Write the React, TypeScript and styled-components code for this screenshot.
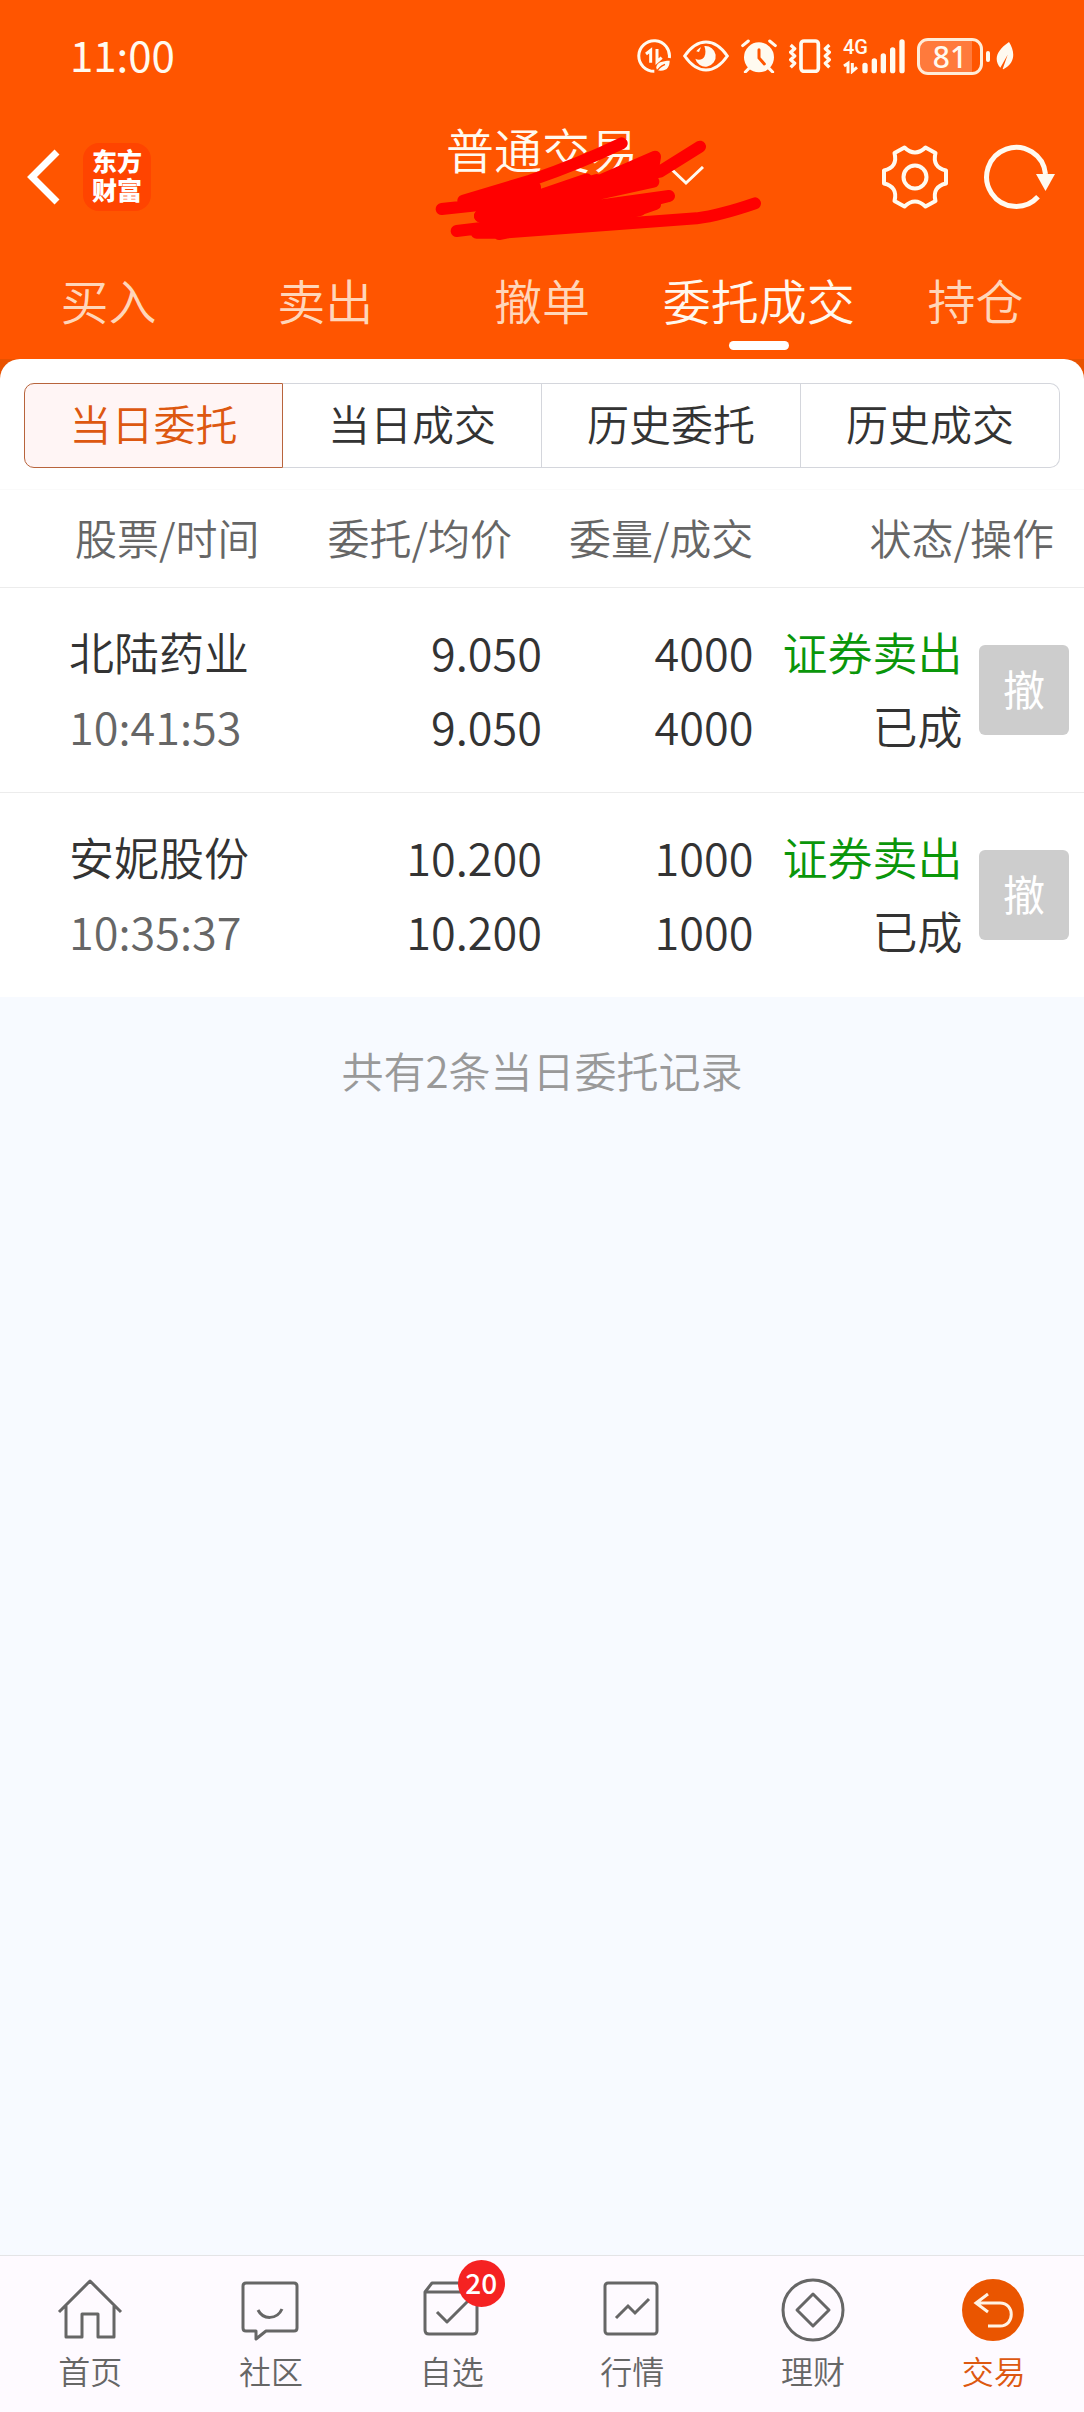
import React from "react";
import styled, { createGlobalStyle } from "styled-components";

const GlobalStyle = createGlobalStyle`
  *, *::before, *::after { box-sizing: border-box; }
  body {
    margin: 0;
    background: #f7faff;
    color: #333;
    font-family: "Noto Sans CJK SC", "Noto Sans", sans-serif;
    font-weight: 350;
  }
  button {
    margin: 0;
    padding: 0;
    border: 0;
    background: none;
    font: inherit;
    color: inherit;
    cursor: pointer;
  }
  a { color: inherit; text-decoration: none; }
  svg { display: block; flex: none; }
`;

const Screen = styled.div`
  min-height: 100vh;
  display: flex;
  flex-direction: column;
`;

const Header = styled.header`
  background: #ff5500;
  color: #fffaf0;
`;

const StatusBar = styled.div`
  display: flex;
  align-items: center;
  justify-content: space-between;
  height: 112px;
  padding: 0 70px;
`;

const Clock = styled.time`
  padding-bottom: 4px;
  font-size: 42px;
  font-weight: 400;
  line-height: 48px;
`;

const StatusIcons = styled.div`
  display: flex;
  align-items: center;
  gap: 12px;
`;

const Signal = styled.div`
  position: relative;
  width: 62px;
  height: 36px;
`;

const SignalLabel = styled.span`
  position: absolute;
  left: 0;
  top: 0;
  font: 500 20px/18px Roboto, sans-serif;
`;

const Battery = styled.div`
  display: flex;
  align-items: center;
  gap: 3px;
`;

const BatteryBody = styled.span`
  width: 66px;
  height: 37px;
  border: 3px solid #ffecd8;
  border-radius: 11px;
  background: linear-gradient(90deg, #ff7a3c 86%, #ff5500 86%);
  font: 500 30px/31px "Noto Sans", sans-serif;
  text-align: center;
`;

const BatteryTip = styled.span`
  width: 4px;
  height: 11px;
  margin-right: 3px;
  border-radius: 2px;
  background: #fffaf0;
`;

const NavBar = styled.div`
  position: relative;
  display: grid;
  grid-template-columns: 1fr auto 1fr;
  align-items: center;
  height: 130px;
  padding: 0 27px 0 27px;
`;

const NavSide = styled.div<{ $end?: boolean }>`
  display: flex;
  align-items: center;
  justify-content: ${(p) => (p.$end ? "flex-end" : "flex-start")};
  gap: ${(p) => (p.$end ? 34 : 22)}px;
`;

const Logo = styled.span`
  display: grid;
  place-content: center;
  width: 68px;
  height: 68px;
  border-radius: 16px;
  background: #ff4400;
  color: #fff;
  font-family: "Liberation Sans", "Noto Sans CJK SC", sans-serif;
  font-size: 25px;
  font-weight: 900;
  line-height: 29px;
`;

const AccountButton = styled.button`
  align-self: start;
  font-size: 48px;
  line-height: 72px;
`;

const Chevron = styled.svg`
  position: absolute;
  left: calc(50% + 126px);
  top: 54px;
`;

const Scribble = styled.svg`
  position: absolute;
  left: calc(50% - 122px);
  top: -12px;
  pointer-events: none;
`;

const MainTabs = styled.nav`
  display: grid;
  grid-template-columns: repeat(5, 1fr);
  height: 117px;
`;

const MainTab = styled.button<{ $active?: boolean }>`
  display: flex;
  flex-direction: column;
  align-items: center;
  padding-top: 24px;
  color: ${(p) => (p.$active ? "#fff8ee" : "#ffd6ba")};
  font-size: 48px;
  line-height: 66px;
  white-space: nowrap;

  &::after {
    content: "";
    width: 60px;
    height: 9px;
    margin-top: 9px;
    border-radius: 5px;
    background: ${(p) => (p.$active ? "#fff" : "transparent")};
  }
`;

const CardBackdrop = styled.div`
  background: linear-gradient(#e95200 24px, #fff 24px);
`;

const Card = styled.main`
  border-radius: 20px 20px 0 0;
  background: #fff;
`;

const Segments = styled.div`
  display: grid;
  grid-template-columns: repeat(4, 1fr);
  padding: 24px 24px 21px;
`;

const Segment = styled.button<{ $active?: boolean }>`
  height: 85px;
  padding-bottom: 5px;
  border: 1px solid ${(p) => (p.$active ? "#b8643c" : "#d4d6dc")};
  border-left-width: ${(p) => (p.$active ? 1 : 0)}px;
  background: ${(p) => (p.$active ? "#fff5f5" : "#fff")};
  color: ${(p) => (p.$active ? "#dd5810" : "#333")};
  font-size: 42px;
  line-height: 60px;

  &:first-child { border-radius: 10px 0 0 10px; }
  &:last-child { border-radius: 0 10px 10px 0; }
`;

const OrderTable = styled.table`
  width: 100%;
  border-collapse: collapse;
  table-layout: fixed;
`;

const Col = styled.col<{ $share: string }>`
  width: ${(p) => p.$share};
`;

const HeadCell = styled.th<{ $pad: string; $left?: boolean }>`
  height: 98px;
  padding: ${(p) => p.$pad};
  border-top: 1px solid #fafafa;
  border-bottom: 1px solid #ececec;
  color: #666;
  font-size: 42px;
  font-weight: 350;
  line-height: 60px;
  text-align: ${(p) => (p.$left ? "left" : "right")};
  white-space: nowrap;
`;

const Row = styled.tr`
  & + & { border-top: 1px solid #ececec; }
`;

const Cell = styled.td<{ $left?: boolean }>`
  padding: 27px 0 29px ${(p) => (p.$left ? 69 : 0)}px;
  font-size: 45px;
  line-height: 74px;
  text-align: ${(p) => (p.$left ? "left" : "right")};
  white-space: nowrap;
`;

const Line = styled.div<{ $tone?: "muted" | "sell" }>`
  color: ${(p) => (p.$tone === "muted" ? "#666" : p.$tone === "sell" ? "#0a960a" : "#333")};
`;

const ActionCell = styled.td`
  padding: 0 15px 0 0;
  vertical-align: middle;
`;

const CancelButton = styled.button`
  display: block;
  width: 90px;
  height: 90px;
  margin-left: auto;
  padding-bottom: 6px;
  border-radius: 6px;
  background: #cdcdcd;
  color: #fff;
  font-size: 42px;
  font-weight: 400;
`;

const Summary = styled.p`
  flex: 1;
  margin: 0;
  padding-top: 43px;
  color: #999;
  font-size: 42px;
  line-height: 60px;
  text-align: center;
`;

const BottomBar = styled.nav`
  display: grid;
  grid-template-columns: repeat(6, 1fr);
  height: 157px;
  border-top: 1px solid #e4e4e6;
  background: #fefaff;
`;

const BottomLink = styled.a<{ $active?: boolean }>`
  display: flex;
  flex-direction: column;
  align-items: center;
  padding-top: 20px;
  color: ${(p) => (p.$active ? "#dd5810" : "#666")};
  font-size: 32px;
  line-height: 46px;
`;

const IconBox = styled.span`
  position: relative;
  width: 66px;
  height: 70px;
  margin-bottom: 1px;
`;

const Badge = styled.span`
  position: absolute;
  left: 39px;
  top: -16px;
  width: 47px;
  height: 47px;
  border-radius: 50%;
  background: #f52222;
  color: #fff;
  font-size: 28px;
  font-weight: 500;
  line-height: 44px;
  text-align: center;
`;

const statusInk = "#fffaf0";

const DataIcon = () => (
  <svg width="34" height="34" viewBox="0 0 102 102" fill="none" stroke={statusInk} strokeWidth="9">
    <path d="M97 57A46 46 0 1 0 52 97" />
    <path d="M27 45l14-11v37M60 30v38l14-12" strokeWidth="9" />
    <path d="M98 65c-22 0-40 6-40 20 0 6 3 9 3 9 30 5 37-12 37-29z" fill={statusInk} stroke="none" />
    <path d="M56 102c6-12 14-20 28-26" stroke="#ff5500" strokeWidth="4" />
  </svg>
);

const EyeIcon = () => (
  <svg width="46" height="34" viewBox="0 0 138 102">
    <path d="M5 51C25 22 48 9 69 9s44 13 64 42C113 80 90 93 69 93S25 80 5 51z" fill="none" stroke={statusInk} strokeWidth="9" />
    <path d="M64 21a31 31 0 1 1-27 38c10 6 22 3 27-6 5-8 4-22 0-32z" fill={statusInk} />
    <path d="M40 37c4-6 8-9 14-12l-6 14z" fill={statusInk} />
  </svg>
);

const AlarmIcon = () => (
  <svg width="36" height="34" viewBox="0 0 108 102">
    <circle cx="54" cy="55" r="45" fill={statusInk} />
    <path d="M5 20L22 6M86 6l17 14M26 86l-13 13M82 86l13 13" stroke={statusInk} strokeWidth="9" strokeLinecap="round" />
    <path d="M54 32v25l16 18" fill="none" stroke="#ff5500" strokeWidth="9" strokeLinecap="round" />
  </svg>
);

const VibrateIcon = () => (
  <svg width="42" height="34" viewBox="0 0 126 102" fill="none" stroke={statusInk} strokeWidth="10" strokeLinejoin="round">
    <rect x="36" y="6" width="52" height="91" rx="9" strokeWidth="11" />
    <path d="M5 18l12 11-12 11 12 11-12 11 12 11-12 12M121 18l-12 11 12 11-12 11 12 11-12 11 12 12" />
  </svg>
);

const SignalBars = () => (
  <svg width="62" height="36" viewBox="0 0 186 108" stroke={statusInk} strokeLinecap="round">
    <path d="M66 82v16M94 69v29M121 54v44M149 36v62M177 12v86" strokeWidth="16" />
    <path d="M3 84l12-8v30M28 75v25l14-12" fill="none" strokeWidth="9" strokeLinecap="butt" />
  </svg>
);

const LeafIcon = () => (
  <svg width="18" height="28" viewBox="0 0 54 84">
    <path d="M39 0c17 26 22 62-17 82l-2-1 15-43-22 39C-6 55-2 28 39 0z" fill={statusInk} />
  </svg>
);

const BackIcon = () => (
  <svg width="34" height="58" viewBox="3 0 34 58" fill="none" stroke="#fff" strokeWidth="7">
    <path d="M33 4L8 29l25 25" />
  </svg>
);

const GearIcon = () => (
  <svg width="68" height="68" viewBox="-34 -34 68 68" fill="none" stroke={statusInk} strokeWidth="4" strokeLinejoin="round">
    <circle r="11.5" />
    <path d="M-10.5-29.5Q0-19.5 10.5-29.5L20.5-24Q16.9-9.75 31-6.5V6.5Q16.9 9.75 20.5 24L10.5 29.5Q0 19.5-10.5 29.5L-20.5 24Q-16.9 9.75-31 6.5V-6.5Q-16.9-9.75-20.5-24Z" />
  </svg>
);

const RefreshIcon = () => (
  <svg width="74" height="68" viewBox="-33 -34 74 68">
    <path d="M22 19.7A29.5 29.5 0 1 1 29.5-3" fill="none" stroke={statusInk} strokeWidth="5" />
    <path d="M20-3h19L29.5 14z" fill={statusInk} />
  </svg>
);

const HomeIcon = () => (
  <svg width="66" height="70" viewBox="0 0 66 70" fill="none" stroke="#666" strokeWidth="3" strokeLinejoin="round">
    <path d="M2 36L33 5l31 31M9 30v31h16V38h16v23h16V30" />
  </svg>
);

const ChatIcon = () => (
  <svg width="66" height="70" viewBox="0 0 66 70" fill="none" stroke="#666" strokeWidth="3" strokeLinejoin="round">
    <path d="M8 7h48q3 0 3 3v42q0 3-3 3H28l-10 8v-8H8q-3 0-3-3V10q0-3 3-3z" />
    <path d="M20 34c5 10 19 10 24-1" />
  </svg>
);

const BoxIcon = () => (
  <svg width="66" height="70" viewBox="0 0 66 70" fill="none" stroke="#666" strokeWidth="3" strokeLinejoin="round">
    <path d="M6 16l7-9h38l7 9v38q0 4-4 4H10q-4 0-4-4zM6 16h52M18 36l10 10 21-21" />
  </svg>
);

const ChartIcon = () => (
  <svg width="66" height="70" viewBox="0 0 66 70" fill="none" stroke="#666" strokeWidth="3">
    <rect x="6" y="7" width="52" height="51" rx="3" />
    <path d="M17 42l12-12 7 7 14-14" />
  </svg>
);

const FinanceIcon = () => (
  <svg width="66" height="70" viewBox="0 0 66 70" fill="none" stroke="#666" strokeWidth="3" strokeLinejoin="round">
    <circle cx="33" cy="34" r="30" />
    <path d="M33 18l16 16-16 16-16-16z" />
  </svg>
);

const TradeIcon = () => (
  <svg width="66" height="70" viewBox="0 0 66 70" fill="none" stroke="#fff3e4" strokeWidth="3">
    <circle cx="32" cy="34" r="31" fill="#ea5500" stroke="none" />
    <path d="M27 18L15 27l12 9M15 27h24c15 0 15 23 0 23H27" />
  </svg>
);

const orders = [
  { name: "北陆药业", time: "10:41:53", price: "9.050", average: "9.050", amount: "4000", filled: "4000", side: "证券卖出", state: "已成" },
  { name: "安妮股份", time: "10:35:37", price: "10.200", average: "10.200", amount: "1000", filled: "1000", side: "证券卖出", state: "已成" },
];

const mainTabs = ["买入", "卖出", "撤单", "委托成交", "持仓"];
const segments = ["当日委托", "当日成交", "历史委托", "历史成交"];

const bottomLinks = [
  { label: "首页", icon: <HomeIcon /> },
  { label: "社区", icon: <ChatIcon /> },
  { label: "自选", icon: <BoxIcon />, badge: "20" },
  { label: "行情", icon: <ChartIcon /> },
  { label: "理财", icon: <FinanceIcon /> },
  { label: "交易", icon: <TradeIcon />, active: true },
];

export default function App() {
  return (
    <Screen>
      <GlobalStyle />
      <Header>
        <StatusBar>
          <Clock>11:00</Clock>
          <StatusIcons>
            <DataIcon />
            <EyeIcon />
            <AlarmIcon />
            <VibrateIcon />
            <Signal>
              <SignalLabel>4G</SignalLabel>
              <SignalBars />
            </Signal>
            <Battery>
              <BatteryBody>81</BatteryBody>
              <BatteryTip />
              <LeafIcon />
            </Battery>
          </StatusIcons>
        </StatusBar>
        <NavBar>
          <NavSide>
            <button aria-label="返回"><BackIcon /></button>
            <Logo>
              <span>东方</span>
              <span>财富</span>
            </Logo>
          </NavSide>
          <AccountButton>普通交易</AccountButton>
          <NavSide $end>
            <button aria-label="设置"><GearIcon /></button>
            <button aria-label="刷新"><RefreshIcon /></button>
          </NavSide>
          <Chevron width="36" height="20" viewBox="0 0 36 20" fill="none" stroke="#fffaf0" strokeWidth="3">
            <path d="M1 1l17 16L35 1" />
          </Chevron>
          <Scribble width="360" height="160" viewBox="0 0 1080 480" fill="none" stroke="#ff0000" strokeWidth="36" strokeLinecap="round" strokeLinejoin="round">
            <path d="M65 327L170 316L345 262M130 302L330 242Q480 190 605 130M345 262L180 348L500 238" />
            <path d="M345 290L510 255L705 170L700 200L520 255L720 215L840 140" />
            <path d="M180 348L520 285L700 245L520 270L360 300M260 360L500 322L747 288L520 345L705 312L640 335" />
            <path d="M110 393L300 370L660 330M170 398L250 398L830 355Q900 346 1005 310M237 402L400 370" />
            <path d="M190 330L350 285L350 370L200 390zM350 290L530 240L500 300L480 370L350 370z" fill="#ff0000" />
          </Scribble>
        </NavBar>
        <MainTabs>
          {mainTabs.map((label) => (
            <MainTab key={label} $active={label === "委托成交"}>{label}</MainTab>
          ))}
        </MainTabs>
      </Header>
      <CardBackdrop>
        <Card>
          <Segments>
            {segments.map((label, i) => (
              <Segment key={label} $active={i === 0} aria-pressed={i === 0}>{label}</Segment>
            ))}
          </Segments>
          <OrderTable>
            <colgroup>
              <Col $share="27%" />
              <Col $share="23%" />
              <Col $share="19.5%" />
              <Col $share="19.3%" />
              <Col $share="11.2%" />
            </colgroup>
            <thead>
              <tr>
                <HeadCell $left $pad="0 0 4px 75px">股票/时间</HeadCell>
                <HeadCell $pad="0 30px 4px 0">委托/均价</HeadCell>
                <HeadCell $pad="0 0 4px">委量/成交</HeadCell>
                <HeadCell colSpan={2} $pad="0 30px 4px 0">状态/操作</HeadCell>
              </tr>
            </thead>
            <tbody>
              {orders.map((o) => (
                <Row key={o.name}>
                  <Cell $left>
                    <Line>{o.name}</Line>
                    <Line $tone="muted">{o.time}</Line>
                  </Cell>
                  <Cell>
                    <Line>{o.price}</Line>
                    <Line>{o.average}</Line>
                  </Cell>
                  <Cell>
                    <Line>{o.amount}</Line>
                    <Line>{o.filled}</Line>
                  </Cell>
                  <Cell>
                    <Line $tone="sell">{o.side}</Line>
                    <Line>{o.state}</Line>
                  </Cell>
                  <ActionCell>
                    <CancelButton>撤</CancelButton>
                  </ActionCell>
                </Row>
              ))}
            </tbody>
          </OrderTable>
        </Card>
      </CardBackdrop>
      <Summary>共有2条当日委托记录</Summary>
      <BottomBar>
        {bottomLinks.map((item) => (
          <BottomLink key={item.label} href="#" $active={item.active}>
            <IconBox>
              {item.icon}
              {item.badge && <Badge>{item.badge}</Badge>}
            </IconBox>
            {item.label}
          </BottomLink>
        ))}
      </BottomBar>
    </Screen>
  );
}
